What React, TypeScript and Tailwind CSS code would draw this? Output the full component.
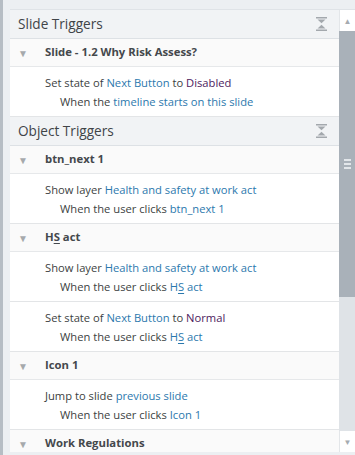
import type { ReactNode } from 'react';

const FONT = { fontFamily: '"Open Sans", "Noto Sans", sans-serif' };

type Part = { t: string; c?: 'blue' | 'value'; u?: boolean };

const blue = 'text-[#2b78ad]';
const value = 'text-[#4c215e]';

function Txt({ parts }: { parts: Part[] }) {
  return (
    <>
      {parts.map((p, i) => (
        <span key={i} className={p.c === 'blue' ? blue : p.c === 'value' ? value : ''}>
          {p.u ? (
            <>
              {p.t[0]}
              <span className="underline underline-offset-2">{p.t[1]}</span>
              {p.t.slice(2)}
            </>
          ) : (
            p.t
          )}
        </span>
      ))}
    </>
  );
}

function CollapseIcon() {
  return (
    <svg width="11" height="14" viewBox="0 0 11 14" className="text-[#a3a8ad]">
      <rect x="0" y="0" width="11" height="1.5" fill="currentColor" />
      <path d="M1.5 2.5 H9.5 L5.5 6.2 Z" fill="currentColor" />
      <path d="M1.5 11.5 H9.5 L5.5 7.8 Z" fill="currentColor" />
      <rect x="0" y="12.5" width="11" height="1.5" fill="currentColor" />
    </svg>
  );
}

function SectionHeader({ title }: { title: string }) {
  return (
    <div className="flex h-[29px] shrink-0 items-center justify-between border-b border-[#dde1e5] bg-[#f1f3f5] pl-[8px] pr-[12px]">
      <span className="text-[13.6px] text-[#404448]">{title}</span>
      <CollapseIcon />
    </div>
  );
}

function RowHeader({ children }: { children: ReactNode }) {
  return (
    <div className="flex h-[28px] shrink-0 items-center border-b border-[#e6e8ea] bg-[#fafafa]">
      <span className="ml-[8px] w-[27px] text-[10px] leading-none text-[#a6a9ac]">▼</span>
      <span className="text-[11.3px] font-bold text-[#44484c]">{children}</span>
    </div>
  );
}

function Action({ line1, line2 }: { line1: Part[]; line2: Part[] }) {
  return (
    <div className="flex h-[50px] shrink-0 flex-col border-b border-[#e3e5e7] bg-white pl-[35px] pt-[6px] text-[11.2px] leading-[19px] text-[#3c3f42]">
      <div>
        <Txt parts={line1} />
      </div>
      <div className="pl-[15px]">
        <Txt parts={line2} />
      </div>
    </div>
  );
}

function Scrollbar() {
  return (
    <div className="flex w-[16px] shrink-0 flex-col bg-[#dfe3e7]">
      <div className="flex h-[21px] items-center justify-center border-l border-[#e3e6e9] bg-white text-[8px] text-[#a6abb0]">
        ▲
      </div>
      <div className="flex h-[266px] items-center justify-center bg-[#a9b1b9]">
        <div className="flex flex-col gap-[2px]">
          <div className="h-[2px] w-[7px] bg-[#e2e6ea]" />
          <div className="h-[2px] w-[7px] bg-[#e2e6ea]" />
          <div className="h-[2px] w-[7px] bg-[#e2e6ea]" />
        </div>
      </div>
      <div className="flex-1" />
      <div className="flex h-[21px] items-center justify-center border-l border-[#e3e6e9] bg-white text-[8px] text-[#a6abb0]">
        ▼
      </div>
    </div>
  );
}

export default function App() {
  return (
    <div className="flex h-[455px] w-[355px] overflow-hidden bg-[#eceff2]" style={FONT}>
      <div className="w-[3px] shrink-0 bg-[#b6bdc4]" />
      <div className="flex flex-1 flex-col pl-[7px] pt-[9px] pb-[3px]">
        <div className="flex min-h-0 flex-1 border-t border-[#dfe3e7]">
          <div className="flex min-w-0 flex-1 flex-col overflow-hidden bg-white">
            <SectionHeader title="Slide Triggers" />
            <RowHeader>Slide - 1.2 Why Risk Assess?</RowHeader>
            <Action
              line1={[{ t: 'Set state of ' }, { t: 'Next Button', c: 'blue' }, { t: ' to ' }, { t: 'Disabled', c: 'value' }]}
              line2={[{ t: 'When the ' }, { t: 'timeline starts', c: 'blue' }, { t: ' ' }, { t: 'on this slide', c: 'blue' }]}
            />
            <SectionHeader title="Object Triggers" />
            <RowHeader>btn_next 1</RowHeader>
            <Action
              line1={[{ t: 'Show layer ' }, { t: 'Health and safety at work act', c: 'blue' }]}
              line2={[{ t: 'When the user clicks ' }, { t: 'btn_next 1', c: 'blue' }]}
            />
            <RowHeader>
              H<span className="underline underline-offset-2">S</span> act
            </RowHeader>
            <Action
              line1={[{ t: 'Show layer ' }, { t: 'Health and safety at work act', c: 'blue' }]}
              line2={[{ t: 'When the user clicks ' }, { t: 'HS act', c: 'blue', u: true }]}
            />
            <Action
              line1={[{ t: 'Set state of ' }, { t: 'Next Button', c: 'blue' }, { t: ' to ' }, { t: 'Normal', c: 'value' }]}
              line2={[{ t: 'When the user clicks ' }, { t: 'HS act', c: 'blue', u: true }]}
            />
            <RowHeader>Icon 1</RowHeader>
            <Action
              line1={[{ t: 'Jump to slide ' }, { t: 'previous slide', c: 'blue' }]}
              line2={[{ t: 'When the user clicks ' }, { t: 'Icon 1', c: 'blue' }]}
            />
            <RowHeader>Work Regulations</RowHeader>
          </div>
          <Scrollbar />
        </div>
      </div>
    </div>
  );
}
